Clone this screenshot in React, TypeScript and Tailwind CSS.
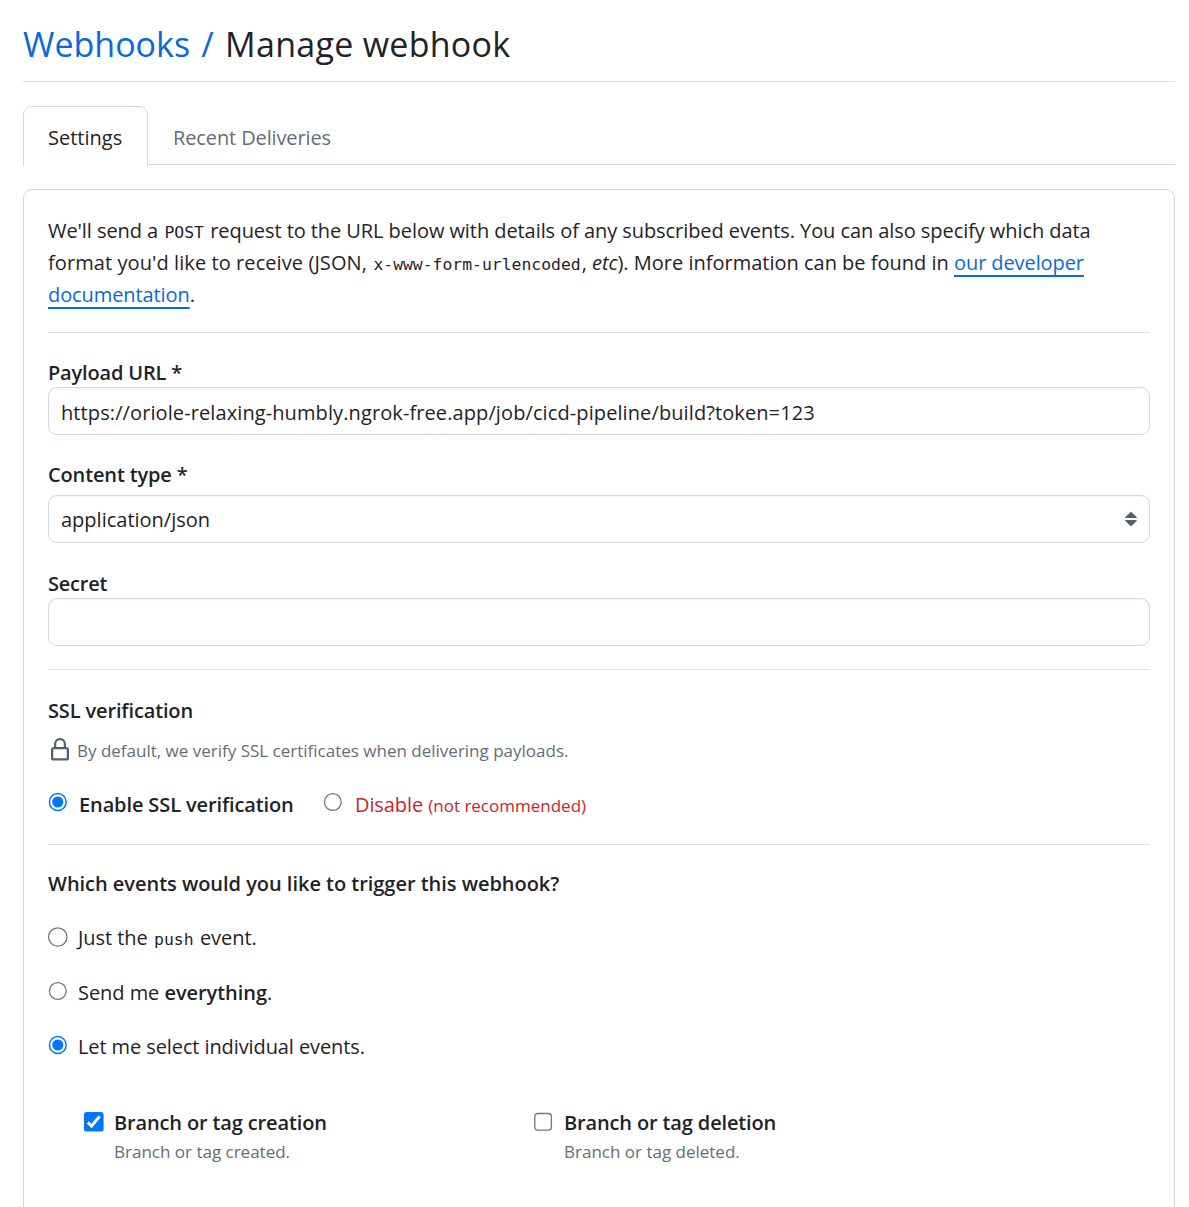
import type { ReactNode } from 'react';

function Radio({ checked = false, large = false }: { checked?: boolean; large?: boolean }) {
  const r = large ? 9.2 : 8.4;
  return (
    <svg className="h-5 w-5 shrink-0" viewBox="0 0 20 20" role="radio" aria-checked={checked}>
      <circle cx="9.8" cy="10" r={r} fill="#fff" stroke={checked ? '#0075ff' : '#767676'} strokeWidth={checked ? 1.5 : 1.3} />
      {checked && <circle cx="9.8" cy="10" r="5.6" fill="#0075ff" />}
    </svg>
  );
}

function Checkbox({ checked = false }: { checked?: boolean }) {
  return (
    <svg className="h-5 w-5 shrink-0" viewBox="0 0 20 20" role="checkbox" aria-checked={checked}>
      {checked ? (
        <>
          <rect width="19.6" height="19.6" rx="2.6" fill="#0075ff" />
          <path d="M3.8 10.4 7.6 14 15.6 4.4" fill="none" stroke="#fff" strokeWidth="3" />
        </>
      ) : (
        <rect x="0.8" y="1.5" width="16.6" height="16.6" rx="2.8" fill="#fff" stroke="#767676" strokeWidth="1.3" />
      )}
    </svg>
  );
}

function Label({ children, className = 'tracking-[-0.14px]' }: { children: ReactNode; className?: string }) {
  return <div className={`h-[30px] leading-8 font-semibold ${className}`}>{children}</div>;
}

function Divider({ className = '' }: { className?: string }) {
  return <div className={`h-px bg-[#dde1e6] ${className}`} />;
}

function Code({ children }: { children: ReactNode }) {
  return (
    <code className="mx-[1.2px] font-['DejaVu_Sans_Mono',monospace] text-[16.4px] leading-none tracking-normal">
      {children}
    </code>
  );
}

function EventOption({ title, note, checked }: { title: string; note: string; checked?: boolean }) {
  return (
    <div className="flex w-[450px] gap-2.5">
      <div className="pt-[5px]">
        <Checkbox checked={checked} />
      </div>
      <div>
        <Label>{title}</Label>
        <div className="mt-px text-[17px] leading-[27px] text-[#656d76]">{note}</div>
      </div>
    </div>
  );
}

const field =
  'flex h-12 items-start rounded-[9px] border border-[#d0d7de] bg-white pl-3 leading-8 shadow-[inset_0_1px_0_rgba(208,215,222,0.2)]';
const link =
  'text-[#0969da] underline decoration-2 underline-offset-[5px] [text-decoration-skip-ink:none] tracking-[-0.09px]';

export default function App() {
  return (
    <div className="h-[1207px] overflow-hidden bg-white pt-5 pr-[14px] pl-[23px] font-['Open_Sans','Noto_Sans',sans-serif] text-[20px] whitespace-nowrap text-[#1f2328]">
      <h1 className="flex h-[62px] border-b border-[#dde1e6] text-[34px] leading-[48px]">
        <span className="text-[#0969da]">Webhooks</span>
        <span className="ml-[11px] text-[#0969da]">/</span>
        <span className="ml-[11.5px] tracking-[0.28px]">Manage webhook</span>
      </h1>

      <nav className="mt-6 flex h-[59px] border-b border-[#d0d7de] leading-8">
        <div className="h-[60px] w-[125px] rounded-t-[9px] border border-b-0 border-[#d0d7de] bg-white pt-[15px] pl-6">
          Settings
        </div>
        <div className="pt-4 pl-[25px] tracking-[-0.12px] text-[#656d76]">Recent Deliveries</div>
      </nav>

      <main className="mt-6 h-[1040px] rounded-t-[9px] border border-[#d0d7de] px-6 pt-[25px]">
        <p className="leading-8 tracking-[-0.07px]">
          We'll send a <Code>POST</Code> request to the URL below with details of any subscribed events. You can also
          specify which data
          <br />
          <span className="tracking-[0.08px]">format you'd like to receive (JSON, </span>
          <Code>x-www-form-urlencoded</Code>, <em>etc</em>
          <span className="tracking-normal">). More information can be found in </span>
          <a className={link}>our developer</a>
          <br />
          <a className={link}>documentation</a>.
        </p>

        <Divider className="mt-[21px]" />

        <Label className="mt-6 tracking-[-0.17px]">Payload URL *</Label>
        <div className={`pt-[9px] tracking-[0.1px] ${field}`}>
          https://oriole-relaxing-humbly.ngrok-free.app/job/cicd-pipeline/build?token=123
        </div>

        <Label className="mt-6 tracking-[-0.14px]">Content type *</Label>
        <div className={`mt-1.5 justify-between pt-2 pr-3 ${field}`}>
          <span>application/json</span>
          <svg className="mt-[7px] h-4 w-3" viewBox="0 0 12 16" fill="#57606a">
            <path d="M5.3 1.2Q6 .5 6.7 1.2L11.6 6.1Q12.2 7 11.4 7H.6Q-.2 7 .4 6.1ZM5.3 14.8Q6 15.5 6.7 14.8L11.6 9.9Q12.2 9 11.4 9H.6Q-.2 9 .4 9.9Z" />
          </svg>
        </div>

        <Label className="mt-[25px] tracking-[-0.2px]">Secret</Label>
        <div className={field} />

        <Divider className="mt-[23px]" />

        <Label className="mt-[25px] tracking-[-0.14px]">SSL verification</Label>
        <div className="mt-[13px] flex h-[27px] text-[17px] leading-[25px] text-[#656d76]">
          <svg className="h-6 w-6" viewBox="0 0 16 16" fill="#57606a">
            <path d="M4 4a4 4 0 0 1 8 0v2h.25c.966 0 1.75.784 1.75 1.75v5.5A1.75 1.75 0 0 1 12.25 15h-8.5A1.75 1.75 0 0 1 2 13.25v-5.5C2 6.784 2.784 6 3.75 6H4Zm8.25 3.5h-8.5a.25.25 0 0 0-.25.25v5.5c0 .138.112.25.25.25h8.5a.25.25 0 0 0 .25-.25v-5.5a.25.25 0 0 0-.25-.25ZM10.5 6V4a2.5 2.5 0 1 0-5 0v2Z" />
          </svg>
          <span className="ml-[5px]">By default, we verify SSL certificates when delivering payloads.</span>
        </div>
        <div className="mt-[23px] flex h-8 leading-8">
          <div className="flex w-[275px] gap-[11px] pt-1">
            <Radio checked />
            <span className="-mt-[3px] font-semibold tracking-[-0.12px]">Enable SSL verification</span>
          </div>
          <div className="flex gap-3 pt-1">
            <Radio />
            <span className="-mt-[3px] text-[#cf222e]">
              <span className="tracking-[-0.1px]">Disable</span> <span className="text-[17px]">(not recommended)</span>
            </span>
          </div>
        </div>

        <Divider className="mt-6" />

        <Label className="mt-[23px] tracking-[-0.03px]">Which events would you like to trigger this webhook?</Label>
        <div className="mt-6 flex gap-2.5 leading-8">
          <div className="pt-[5px]">
            <Radio large />
          </div>
          <span className="tracking-[-0.05px]">
            Just the <Code>push</Code> event.
          </span>
        </div>
        <div className="mt-[23px] flex gap-2.5 leading-8">
          <div className="pt-1">
            <Radio />
          </div>
          <span className="tracking-[-0.05px]">
            Send me <b className="font-semibold">everything</b>.
          </span>
        </div>
        <div className="mt-[22px] flex gap-2.5 leading-8">
          <div className="pt-1">
            <Radio checked />
          </div>
          <span className="tracking-[-0.1px]">Let me select individual events.</span>
        </div>

        <div className="mt-[44px] flex pl-9">
          <EventOption title="Branch or tag creation" note="Branch or tag created." checked />
          <EventOption title="Branch or tag deletion" note="Branch or tag deleted." />
        </div>
      </main>
    </div>
  );
}
